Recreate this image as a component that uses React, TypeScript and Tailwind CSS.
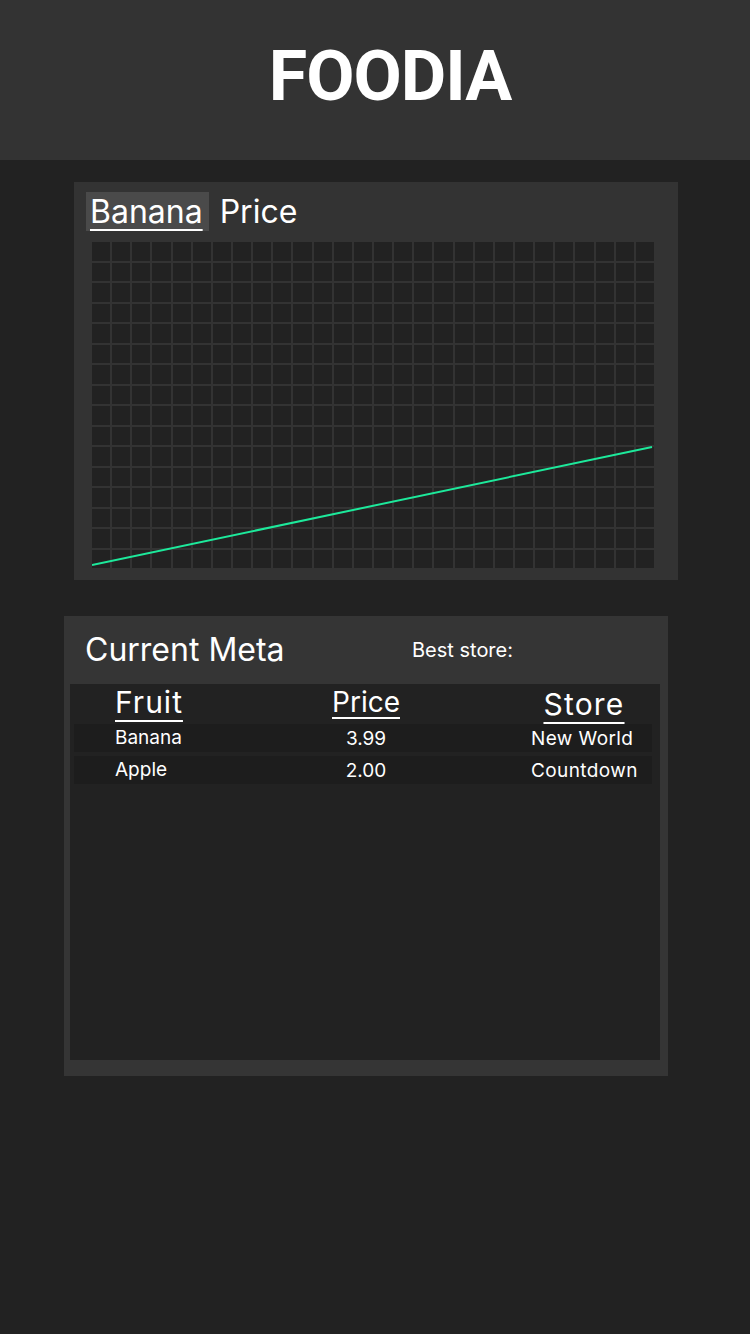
import React from "react";

const rows = [
  { fruit: "Banana", price: "3.99", store: "New World" },
  { fruit: "Apple", price: "2.00", store: "Countdown" },
];

export default function App() {
  const cells = Array.from({ length: 28 * 16 });
  return (
    <div
      className="min-h-[1334px] w-[750px] bg-[#222222] text-white"
      style={{ fontFamily: "Inter, 'Noto Sans', sans-serif" }}
    >
      <header className="flex h-[160px] items-center justify-center bg-[#333333] pb-[8px] pl-[30px]">
        <h1
          className="text-[70px] font-bold leading-none tracking-[-1px]"
          style={{ fontFamily: "Roboto, 'Liberation Sans', sans-serif" }}
        >
          FOODIA
        </h1>
      </header>

      <section className="ml-[74px] mt-[22px] h-[398px] w-[604px] bg-[#333333] pl-[12px] pt-[10px]">
        <div className="flex h-[39px] items-start text-[32px] leading-[39px]">
          <span className="bg-[#4a4a4a] pl-[4px] pr-[6px] underline decoration-2 underline-offset-[6px]">
            Banana
          </span>
          <span className="ml-[11px]">Price</span>
        </div>
        <div className="relative ml-[6px] mt-[11px] h-[326px] w-[562px]">
          <div className="grid h-full w-full grid-cols-[repeat(28,minmax(0,1fr))] grid-rows-[repeat(16,minmax(0,1fr))] gap-[2px]">
            {cells.map((_, i) => (
              <div key={i} className="bg-[#222222]" />
            ))}
          </div>
          <svg
            className="absolute left-0 top-0"
            width="562"
            height="326"
            viewBox="0 0 562 326"
          >
            <line x1="0" y1="323" x2="560" y2="205" stroke="#1de99b" strokeWidth="2" />
          </svg>
        </div>
      </section>

      <section className="ml-[64px] mt-[36px] flex h-[460px] w-[604px] flex-col bg-[#353535] pb-[16px] pl-[6px] pr-[8px]">
        <div className="flex h-[68px] items-center">
          <span className="ml-[15px] w-[327px] text-[32px]">Current Meta</span>
          <span className="text-[20px]">Best store:</span>
        </div>
        <div className="flex-1 bg-[#222222] pl-[4px] pr-[8px]">
          <div className="grid h-[40px] grid-cols-[142px_300px_136px] items-start leading-[34px]">
            <span className="pl-[41px] pt-[1px] text-[30px] tracking-[1px]">
              <span className="underline decoration-2 underline-offset-[7px]">Fruit</span>
            </span>
            <span className="pt-[1px] text-center text-[28px]">
              <span className="underline decoration-2 underline-offset-[5px]">Price</span>
            </span>
            <span className="pt-[3px] text-center text-[30px] tracking-[1.2px]">
              <span className="underline decoration-2 underline-offset-[7px]">Store</span>
            </span>
          </div>
          <div className="flex flex-col gap-[4px]">
            {rows.map((r) => (
              <div
                key={r.fruit}
                className="grid h-[28px] grid-cols-[142px_300px_136px] items-start bg-[#1d1d1d] text-[19px] leading-[25px]"
              >
                <span className="pl-[41px] pt-[1px]">{r.fruit}</span>
                <span className="pt-[2px] text-center">{r.price}</span>
                <span className="pl-[15px] pt-[2px] tracking-[0.4px]">{r.store}</span>
              </div>
            ))}
          </div>
        </div>
      </section>
    </div>
  );
}
